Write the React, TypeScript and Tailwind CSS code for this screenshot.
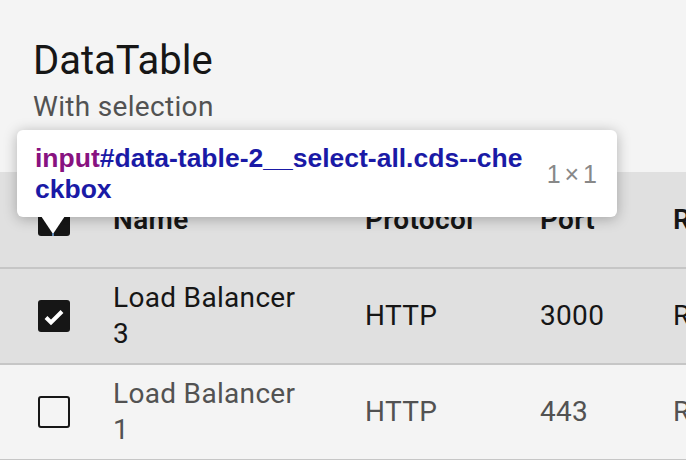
import React from 'react';

interface Row {
  name: string;
  protocol: string;
  port: string;
  rule: string;
  selected: boolean;
}

const rows: Row[] = [
  { name: 'Load Balancer 3', protocol: 'HTTP', port: '3000', rule: 'Round robin', selected: true },
  { name: 'Load Balancer 1', protocol: 'HTTP', port: '443', rule: 'Round robin', selected: false },
];

function Checkbox({ checked }: { checked: boolean }) {
  if (checked) {
    return (
      <span className="flex h-8 w-8 items-center justify-center rounded-[3px] bg-[#161616]">
        <svg width="32" height="32" viewBox="0 0 32 32">
          <path d="M8 17.5 13 22.5 24 11.5" fill="none" stroke="#fff" strokeWidth="4" />
        </svg>
      </span>
    );
  }
  return <span className="block h-8 w-8 rounded-[3px] border-2 border-[#161616]" />;
}

export default function App() {
  return (
    <div className="relative h-[460px] w-[686px] overflow-hidden bg-[#f4f4f4] font-['Roboto',sans-serif]">
      <div className="h-[172px] pl-[33px] pt-[33px]">
        <h1 className="text-[40px] leading-[56px] text-[#161616]">DataTable</h1>
        <p className="text-[28px] leading-[36px] tracking-[0.32px] text-[#525252]">With selection</p>
      </div>

      <div className="w-[900px] text-[28px] leading-[36px] tracking-[0.32px]">
        <div className="grid h-[97px] grid-cols-[81px_252px_175px_133px_259px] items-center border-b-2 border-[#c6c6c6] bg-[#e0e0e0] font-semibold text-[#161616]">
          <div className="pl-[38px]">
            <span className="block h-8 w-8 rounded-[3px] bg-[#161616]" />
          </div>
          <div className="px-8">Name</div>
          <div className="px-8">Protocol</div>
          <div className="px-8">Port</div>
          <div className="px-8">Rule</div>
        </div>

        {rows.map((row) => (
          <div
            key={row.name}
            className={`grid h-[96px] grid-cols-[81px_252px_175px_133px_259px] items-center border-b-2 border-[#c6c6c6] ${
              row.selected ? 'bg-[#e0e0e0] text-[#161616]' : 'bg-[#f4f4f4] text-[#525252]'
            }`}
          >
            <div className="pl-[38px]">
              <Checkbox checked={row.selected} />
            </div>
            <div className="px-8">{row.name}</div>
            <div className="px-8">{row.protocol}</div>
            <div className="px-8">{row.port}</div>
            <div className="whitespace-nowrap px-8">{row.rule}</div>
          </div>
        ))}
      </div>

      {/* devtools inspect tooltip */}
      <div className="absolute left-[17px] top-[130px] flex h-[87px] w-[600px] items-center justify-between rounded-[6px] bg-white pl-[18px] pr-[20px] font-['Liberation_Sans',Arial,sans-serif] shadow-[0_2px_14px_rgba(0,0,0,0.28)]">
        <div className="text-[26.5px] font-bold leading-[31px] text-[#1a1aa6]">
          <span className="text-[#881280]">input</span>#data-table-2__select-all.cds--che
          <br />
          ckbox
        </div>
        <div className="mt-[2px] text-[25px] leading-[31px] text-[#888] [word-spacing:-3px]">1 × 1</div>
      </div>
      <svg className="absolute left-[40px] top-[215px]" width="26" height="20" viewBox="0 0 26 20">
        <polygon points="1,1 25,1 13,19" fill="#fff" />
      </svg>
      <span className="absolute left-[52px] top-[233px] h-[3px] w-[2px] bg-[#5b84b1]" />
    </div>
  );
}
